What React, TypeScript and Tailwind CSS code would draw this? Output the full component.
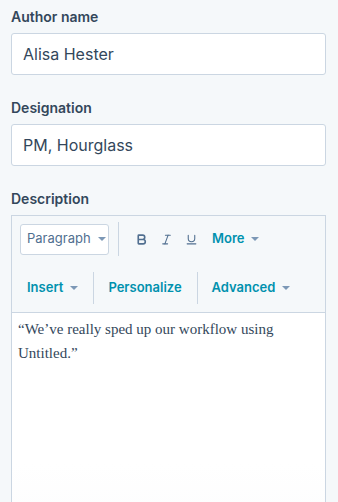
import { Bold, Italic, Underline } from 'lucide-react';

const Caret = () => (
  <svg width="8" height="4" viewBox="0 0 8 4" className="ml-[7px] shrink-0">
    <path d="M0 0h8L4 4z" fill="#7c98b6" />
  </svg>
);

const Field = ({ label, value }: { label: string; value: string }) => (
  <div className="flex flex-col">
    <label className="block text-[14px] leading-5 font-semibold text-[#33475b]">{label}</label>
    <div className="mt-[6px] h-[42px] flex items-center px-[11px] bg-white border border-[#cbd6e2] rounded-[3px] text-[16px] text-[#33475b]">
      {value}
    </div>
  </div>
);

const ToolLink = ({ label, caret = true }: { label: string; caret?: boolean }) => (
  <button className="flex items-center text-[13px] font-semibold text-[#0091ae]">
    {label}
    {caret && <Caret />}
  </button>
);

export default function App() {
  return (
    <div
      className="w-[338px] h-[502px] overflow-hidden bg-[#f5f8fa] pl-[11px] pr-[12px] pt-[7px]"
      style={{ fontFamily: 'Inter, "Noto Sans", sans-serif' }}
    >
      <Field label="Author name" value="Alisa Hester" />
      <div className="mt-[23px]">
        <Field label="Designation" value="PM, Hourglass" />
      </div>

      <div className="mt-[23px]">
        <label className="block text-[14px] leading-5 font-semibold text-[#33475b]">Description</label>
        <div className="mt-[6px] border border-[#cbd6e2] h-[400px] flex flex-col">
          <div className="bg-[#f5f8fa] border-b border-[#cbd6e2] px-[8px] pt-[6px] pb-[8px]">
            <div className="flex items-center h-[34px]">
              <div className="w-[89px] h-[31px] bg-white border border-[#cbd6e2] rounded-[3px] flex items-center justify-between pl-[6px] pr-[7px] text-[13px] text-[#516f90]">
                Paragraph
                <Caret />
              </div>
              <div className="w-px h-[34px] bg-[#cbd6e2] ml-[9px]" />
              <div className="flex items-center ml-[16px] gap-[12px] text-[#516f90]">
                <Bold size={13} strokeWidth={3} />
                <Italic size={13} strokeWidth={2} />
                <Underline size={13} strokeWidth={2} />
              </div>
              <div className="ml-[14px]">
                <ToolLink label="More" />
              </div>
            </div>
            <div className="flex items-center h-[32px] mt-[16px]">
              <div className="pl-[7px] pr-[15px]">
                <ToolLink label="Insert" />
              </div>
              <div className="w-px h-[32px] bg-[#cbd6e2]" />
              <div className="pl-[14px] pr-[15px]">
                <ToolLink label="Personalize" caret={false} />
              </div>
              <div className="w-px h-[32px] bg-[#cbd6e2]" />
              <div className="px-[14px]">
                <ToolLink label="Advanced" />
              </div>
            </div>
          </div>
          <div className="flex-1 bg-gradient-to-b from-white via-white to-[#f8f9fa] px-[6px] pt-[4px]">
            <p
              className="text-[15px] leading-6 text-[#33475b]"
              style={{ fontFamily: '"Liberation Serif", serif' }}
            >
              “We’ve really sped up our workflow using Untitled.”
            </p>
          </div>
        </div>
      </div>
    </div>
  );
}
